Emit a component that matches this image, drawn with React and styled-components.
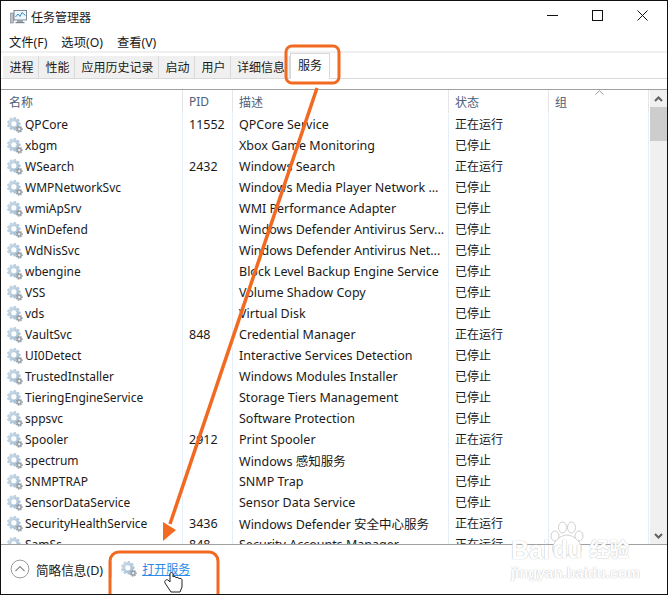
import React from "react";
import styled, { createGlobalStyle } from "styled-components";

const Global = createGlobalStyle`
  html, body { margin: 0; padding: 0; background: #fff; }
  body { width: 668px; height: 595px; overflow: hidden; }
`;

const FONT = `"Noto Sans", "Noto Sans CJK SC", sans-serif`;

const Stage = styled.div`
  position: relative;
  width: 668px;
  height: 595px;
  overflow: hidden;
  box-sizing: border-box;
  border: 1px solid #111;
  background: #fff;
  font-family: ${FONT};
  font-size: 12.5px;
  color: #1a1a1a;
  display: flex;
  flex-direction: column;
`;

const TitleBar = styled.div`
  height: 29px;
  display: flex;
  align-items: center;
  padding-left: 9px;
  gap: 4px;
  flex: none;
  padding-top: 2px;
  box-sizing: border-box;
`;
const TitleText = styled.span`
  font-size: 12px;
  flex: 1;
`;
const WinButtons = styled.div`
  display: flex;
  height: 29px;
  margin-right: 2px;
`;
const WinBtn = styled.div`
  width: 45px;
  display: flex;
  align-items: center;
  justify-content: center;
  margin-top: -2px;
`;

const MenuBar = styled.div`
  height: 20px;
  display: flex;
  align-items: center;
  padding-left: 8px;
  gap: 14px;
  flex: none;
  margin-top: 1px;
  padding-top: 1px;
  box-sizing: border-box;
`;
const MenuItem = styled.span`
  font-size: 12.3px;
`;

const TabStrip = styled.div`
  flex: none;
  height: 25px;
  border-top: 2px solid #f0f0f0;
  border-bottom: 1px solid #d9d9d9;
  display: flex;
  padding-left: 2px;
  align-items: flex-end;
`;
const Tab = styled.div`
  box-sizing: border-box;
  width: ${p => p.$w}px;
  height: 22px;
  padding-left: 2px;
  background: #f0f0f0;
  border-right: 1px solid #d9d9d9;
  ${p => p.$active ? "background: #fff; border-left: 1px solid #d9d9d9; border-top: 1px solid #d9d9d9; margin-bottom: -1px; height: 26px; padding-bottom: 3px; padding-left: 0;" : ""}
  display: flex;
  align-items: center;
  justify-content: center;
  font-size: 12px;
  white-space: nowrap;
  overflow: hidden;
  position: relative;
`;
const TabGap = styled.div`
  height: 10px;
  flex: none;
`;

const TableFrame = styled.div`
  flex: none;
  box-sizing: border-box;
  height: 456px;
  border-top: 1px solid #a0a0a0;
  border-bottom: 1px solid #a0a0a0;
  display: flex;
  position: relative;
  overflow: hidden;
`;
const Table = styled.div`
  flex: 1;
  min-width: 0;
  overflow: hidden;
`;
const COLS = "182px 50px 216px 100px 100px";
const HeadRow = styled.div`
  display: grid;
  grid-template-columns: ${COLS};
  height: 23px;
`;
const HeadCell = styled.div`
  box-sizing: border-box;
  border-right: 1px solid #e5e5e5;
  padding-left: ${p => p.$pad || 6}px;
  display: flex;
  align-items: center;
  color: #4c607a;
  font-size: 12px;
  position: relative;
`;
const SortCaret = styled.svg`
  position: absolute;
  left: 46px;
  top: 0;
`;
const Body = styled.div`
  display: grid;
  grid-template-columns: ${COLS};
  grid-auto-rows: 21px;
  padding-top: 1px;
`;
const Cell = styled.div`
  box-sizing: border-box;
  border-right: 1px solid #e5effa;
  padding-left: 6px;
  display: flex;
  align-items: center;
  white-space: nowrap;
  overflow: hidden;
`;
const NameCell = styled(Cell)`
  gap: 2px;
  font-size: 12px;
`;
const StatusCell = styled(Cell)`
  font-size: 12px;
  padding-bottom: 1px;
`;
const Scrollbar = styled.div`
  width: 17px;
  flex: none;
  background: #f0f0f0;
  display: flex;
  flex-direction: column;
  align-items: center;
`;
const ScrollBtn = styled.div`
  height: 17px;
  width: 17px;
  display: flex;
  align-items: center;
  justify-content: center;
  flex: none;
`;
const Thumb = styled.div`
  width: 17px;
  height: 34px;
  background: #cdcdcd;
  flex: none;
`;
const ScrollSpace = styled.div`
  flex: 1;
`;

const Footer = styled.div`
  flex: 1;
  display: flex;
  align-items: center;
  padding-left: 9px;
  padding-bottom: 1px;
`;
const Expander = styled.svg`
  flex: none;
  margin-right: 6px;
`;
const FooterLabel = styled.span`
  font-size: 12.6px;
`;
const Separator = styled.div`
  width: 1px;
  height: 16px;
  background: #d0d0d0;
  margin: 0 8px;
`;
const FooterLink = styled.a`
  color: #2a8ae6;
  text-decoration: underline;
  font-size: 12px;
  margin-left: 5px;
`;

const Overlay = styled.svg`
  position: absolute;
  left: -1px;
  top: -1px;
  pointer-events: none;
`;
const Watermark = styled.div`
  position: absolute;
  left: 510px;
  top: 521px;
  width: 124px;
  color: #fff;
  pointer-events: none;
  font-family: "Liberation Sans", "Noto Sans CJK SC", sans-serif;
  text-shadow: 0 0 1px #c4c4c4, 0 0 1px #c4c4c4;
  display: flex;
  flex-direction: column;
  padding-top: 16px;
`;
const WmTop = styled.div`
  font-size: 25px;
  font-weight: 700;
  line-height: 24px;
  display: flex;
  align-items: center;
  white-space: nowrap;
  position: relative;
`;
const WmPaw = styled.svg`
  position: absolute;
  left: 38px;
  top: -17px;
`;
const WmDu = styled.span`
  margin-left: 3px;
  position: relative;
  font-size: 24px;
`;
const WmCn = styled.span`
  font-size: 20px;
  margin-left: 7px;
  position: relative;
`;
const WmUrl = styled.div`
  font-size: 14.7px;
  font-weight: 700;
  line-height: 16px;
  margin-top: 3px;
  white-space: nowrap;
`;

function gearPath(cx, cy, ro, ri, n) {
  const pts = [];
  for (let i = 0; i < n; i++) {
    const a = (i / n) * Math.PI * 2;
    const w = (Math.PI / n);
    [[a - w * 0.75, ri], [a - w * 0.4, ro], [a + w * 0.4, ro], [a + w * 0.75, ri]].forEach(([t, r]) => {
      pts.push(`${(cx + r * Math.cos(t)).toFixed(2)} ${(cy + r * Math.sin(t)).toFixed(2)}`);
    });
  }
  return "M" + pts.join("L") + "Z";
}

const GearSvg = styled.svg`
  flex: none;
  margin-left: ${p => p.$offset || 0}px;
`;

function Gear({ offset }) {
  return (
    <GearSvg $offset={offset} width="16" height="16" viewBox="0 0 16 16">
      <defs>
        <linearGradient id="gg" x1="0" y1="0" x2="1" y2="1">
          <stop offset="0" stopColor="#d3e4f1" />
          <stop offset="1" stopColor="#9bb8cf" />
        </linearGradient>
      </defs>
      <path d={gearPath(6.8, 6.8, 6.5, 4.9, 9)} fill="url(#gg)" stroke="#a5bace" strokeWidth="0.5" />
      <circle cx="6.8" cy="6.8" r="3.2" fill="#fbfdfe" stroke="#a3bacd" strokeWidth="0.7" />
      <path d={gearPath(12.2, 12.2, 3.4, 2.4, 7)} fill="#9aa4ad" stroke="#838e97" strokeWidth="0.3" />
      <circle cx="12.2" cy="12.2" r="1.1" fill="#f5f5f5" />
    </GearSvg>
  );
}

const rows = [
  ["QPCore", "11552", "QPCore Service", "正在运行"],
  ["xbgm", "", "Xbox Game Monitoring", "已停止"],
  ["WSearch", "2432", "Windows Search", "正在运行"],
  ["WMPNetworkSvc", "", "Windows Media Player Network ...", "已停止"],
  ["wmiApSrv", "", "WMI Performance Adapter", "已停止"],
  ["WinDefend", "", "Windows Defender Antivirus Serv...", "已停止"],
  ["WdNisSvc", "", "Windows Defender Antivirus Net...", "已停止"],
  ["wbengine", "", "Block Level Backup Engine Service", "已停止"],
  ["VSS", "", "Volume Shadow Copy", "已停止"],
  ["vds", "", "Virtual Disk", "已停止"],
  ["VaultSvc", "848", "Credential Manager", "正在运行"],
  ["UI0Detect", "", "Interactive Services Detection", "已停止"],
  ["TrustedInstaller", "", "Windows Modules Installer", "已停止"],
  ["TieringEngineService", "", "Storage Tiers Management", "已停止"],
  ["sppsvc", "", "Software Protection", "已停止"],
  ["Spooler", "2912", "Print Spooler", "正在运行"],
  ["spectrum", "", "Windows 感知服务", "已停止"],
  ["SNMPTRAP", "", "SNMP Trap", "已停止"],
  ["SensorDataService", "", "Sensor Data Service", "已停止"],
  ["SecurityHealthService", "3436", "Windows Defender 安全中心服务", "正在运行"],
  ["SamSs", "848", "Security Accounts Manager", "正在运行"],
];

const tabs = [["进程", 36], ["性能", 36], ["应用历史记录", 84], ["启动", 36], ["用户", 36], ["详细信息", 59]];

function AppIcon() {
  return (
    <svg width="17" height="16" viewBox="0 0 17 16">
      <rect x="0.5" y="4" width="3" height="10" fill="#b9c0c6" stroke="#7d868d" strokeWidth="0.6" />
      <rect x="4" y="1.5" width="12.5" height="9.5" fill="#eef5fb" stroke="#6f7d88" strokeWidth="0.9" />
      <path d="M5.5 8 L8 5 L10 7.5 L12 3.5 L15.5 6.5" fill="none" stroke="#3f8fc0" strokeWidth="1" />
      <rect x="7" y="11" width="6" height="2" fill="#9aa4ab" />
      <rect x="5.5" y="13" width="9" height="1.2" fill="#7d868d" />
    </svg>
  );
}

export default function App() {
  return (
    <>
      <Global />
      <Stage>
        <TitleBar>
          <AppIcon />
          <TitleText>任务管理器</TitleText>
          <WinButtons>
            <WinBtn>
              <svg width="11" height="11" viewBox="0 0 11 11"><path d="M0 5.5H11" stroke="#111" strokeWidth="1" /></svg>
            </WinBtn>
            <WinBtn>
              <svg width="11" height="11" viewBox="0 0 11 11"><rect x="0.5" y="0.5" width="10" height="10" fill="none" stroke="#111" strokeWidth="1" /></svg>
            </WinBtn>
            <WinBtn>
              <svg width="11" height="11" viewBox="0 0 11 11"><path d="M0.5 0.5L10.5 10.5M10.5 0.5L0.5 10.5" stroke="#111" strokeWidth="1" /></svg>
            </WinBtn>
          </WinButtons>
        </TitleBar>
        <MenuBar>
          <MenuItem>文件(F)</MenuItem>
          <MenuItem>选项(O)</MenuItem>
          <MenuItem>查看(V)</MenuItem>
        </MenuBar>
        <TabStrip>
          {tabs.map(([t, w]) => <Tab key={t} $w={w}>{t}</Tab>)}
          <Tab $w={40} $active>服务</Tab>
        </TabStrip>
        <TabGap />
        <TableFrame>
          <Table>
            <HeadRow>
              <HeadCell $pad={8}>名称</HeadCell>
              <HeadCell>PID</HeadCell>
              <HeadCell>描述</HeadCell>
              <HeadCell>状态</HeadCell>
              <HeadCell>组
                <SortCaret width="9" height="5" viewBox="0 0 9 5"><path d="M0.5 4.5L4.5 0.8L8.5 4.5" fill="none" stroke="#9a9a9a" strokeWidth="1" /></SortCaret>
              </HeadCell>
            </HeadRow>
            <Body>
              {rows.map((r) => (
                <React.Fragment key={r[0]}>
                  <NameCell><Gear />{r[0]}</NameCell>
                  <Cell>{r[1]}</Cell>
                  <Cell>{r[2]}</Cell>
                  <StatusCell>{r[3]}</StatusCell>
                  <Cell />
                </React.Fragment>
              ))}
            </Body>
          </Table>
          <Scrollbar>
            <ScrollBtn>
              <svg width="9" height="6" viewBox="0 0 9 6"><path d="M1 5L4.5 1.5L8 5" fill="none" stroke="#606060" strokeWidth="2" /></svg>
            </ScrollBtn>
            <Thumb />
            <ScrollSpace />
            <ScrollBtn>
              <svg width="9" height="6" viewBox="0 0 9 6"><path d="M1 1L4.5 4.5L8 1" fill="none" stroke="#606060" strokeWidth="2" /></svg>
            </ScrollBtn>
          </Scrollbar>
        </TableFrame>
        <Footer>
          <Expander width="20" height="20" viewBox="0 0 20 20">
            <circle cx="10" cy="10" r="8.9" fill="none" stroke="#9a9a9a" strokeWidth="1" />
            <path d="M5.5 12L10 7.5L14.5 12" fill="none" stroke="#8a8a8a" strokeWidth="1.1" />
          </Expander>
          <FooterLabel>简略信息(D)</FooterLabel>
          <Separator />
          <Gear offset={1} />
          <FooterLink>打开服务</FooterLink>
        </Footer>
        <Watermark>
          <WmTop>
            <WmPaw width="36" height="36" viewBox="0 0 36 36">
              <g fill="#fff" stroke="#d0d0d0" strokeWidth="1">
                <ellipse cx="6" cy="15" rx="4" ry="5" />
                <ellipse cx="13.5" cy="6.5" rx="4" ry="5.5" />
                <ellipse cx="22.5" cy="6.5" rx="4" ry="5.5" />
                <ellipse cx="30" cy="15" rx="4" ry="5" />
                <path d="M18 14C25 14 34 22 32 30C30 36 24 34 18 34C12 34 6 36 4 30C2 22 11 14 18 14Z" />
              </g>
            </WmPaw>
            Bai<WmDu>du</WmDu><WmCn>经验</WmCn>
          </WmTop>
          <WmUrl>jingyan.baidu.com</WmUrl>
        </Watermark>
        <Overlay width="668" height="595" viewBox="0 0 668 595">
          <rect x="286" y="46" width="53" height="37" rx="6" fill="none" stroke="#f26a21" strokeWidth="3" />
          <rect x="110" y="552" width="108" height="50" rx="9" fill="none" stroke="#f26a21" strokeWidth="3" />
          <path d="M317 88L170 524" stroke="#f26a21" strokeWidth="3.5" fill="none" />
          <path d="M163 541L163 522L176 530Z" fill="#f26a21" />
          <path d="M170 574 L170 582 L168 580 C166 579 164 581 165 583 L171 592 L180 592 L182 587 L182 580 C182 578 179 578 179 579 C179 577 176 577 176 578 C176 576 173 576 173 577 L173 574 C173 572 170 572 170 574Z" fill="#fff" stroke="#222" strokeWidth="1" strokeLinejoin="round" />
        </Overlay>
      </Stage>
    </>
  );
}
